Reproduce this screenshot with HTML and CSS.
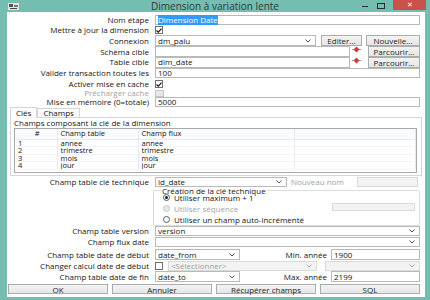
FILE: index.html
```html
<!DOCTYPE html>
<html lang="fr">

<head>
    <meta charset="UTF-8">
    <title>Dimension à variation lente</title>
    <link rel="stylesheet" href="styles.css">
</head>

<body>

    <div class="window">

        <div class="titlebar">
            <div class="app-icon">
                <svg width="11" height="7" viewBox="0 0 11 7">
                    <rect x="0" y="0" width="11" height="7" fill="#e4e4e4" />
                    <rect x="1" y="1" width="4" height="3" fill="#555" />
                    <rect x="6" y="2" width="4" height="2" fill="#7a7a7a" />
                    <rect x="2" y="5" width="7" height="1" fill="#444" />
                </svg>
            </div>
            <div class="title">Dimension à variation lente</div>
            <div class="controls">
                <span class="ctl-min"></span>
                <span class="ctl-max"></span>
                <span class="ctl-close">✕</span>
            </div>
        </div>

        <div class="client">

            <div class="row h10">
                <span class="lbl">Nom étape</span>
                <div class="input grow"><span class="selected">Dimension Date</span></div>
            </div>

            <div class="row h10">
                <span class="lbl">Mettre à jour la dimension</span>
                <span class="check on">
                    <svg width="6" height="5" viewBox="0 0 6 5"><path d="M0.5 2.5 L2.3 4.2 L5.5 0.6" fill="none" stroke="#1a1a1a" stroke-width="1.2" /></svg>
                </span>
            </div>

            <div class="row h11">
                <span class="lbl">Connexion</span>
                <div class="combo w-conn"><span class="val">dm_palu</span><svg class="chev" width="6" height="4" viewBox="0 0 6 4"><path d="M0.5 0.5 L3 3 L5.5 0.5" fill="none" stroke="#555" /></svg></div>
                <button class="btn w-edit">Editer...</button>
                <button class="btn w-new">Nouvelle...</button>
            </div>

            <div class="row h11">
                <span class="lbl">Schéma cible</span>
                <div class="input w-path"></div>
                <span class="var-icon">
                    <svg width="9" height="7" viewBox="0 0 9 7"><path d="M4.5 0.5 L7.5 3.5 L4.5 6.5 L1.5 3.5 Z" fill="#d23b3b" /><path d="M0 3.5 H2 M7 3.5 H9" stroke="#9a9a9a" /></svg>
                </span>
                <button class="btn grow">Parcourir...</button>
            </div>

            <div class="row h10-5">
                <span class="lbl">Table cible</span>
                <div class="input w-path">dim_date</div>
                <span class="var-icon">
                    <svg width="9" height="7" viewBox="0 0 9 7"><path d="M4.5 0.5 L7.5 3.5 L4.5 6.5 L1.5 3.5 Z" fill="#d23b3b" /><path d="M0 3.5 H2 M7 3.5 H9" stroke="#9a9a9a" /></svg>
                </span>
                <button class="btn grow">Parcourir...</button>
            </div>

            <div class="row h10-5">
                <span class="lbl">Valider transaction toutes les</span>
                <div class="input grow">100</div>
            </div>

            <div class="row h10 mt1">
                <span class="lbl">Activer mise en cache</span>
                <span class="check on">
                    <svg width="6" height="5" viewBox="0 0 6 5"><path d="M0.5 2.5 L2.3 4.2 L5.5 0.6" fill="none" stroke="#1a1a1a" stroke-width="1.2" /></svg>
                </span>
            </div>

            <div class="row h8">
                <span class="lbl muted">Précharger cache</span>
                <span class="check off"></span>
            </div>

            <div class="row h10">
                <span class="lbl">Mise en mémoire (0=totale)</span>
                <div class="input grow">5000</div>
            </div>

            <div class="tabs">
                <span class="tab active">Clés</span>
                <span class="tab">Champs</span>
            </div>

            <div class="pane">
                <div class="caption">Champs composant la clé de la dimension</div>
                <div class="grid-wrap">
                    <table class="grid">
                        <colgroup>
                            <col class="c-num">
                            <col class="c-table">
                            <col class="c-flux">
                            <col>
                        </colgroup>
                        <thead>
                            <tr>
                                <th class="num">#</th>
                                <th>Champ table</th>
                                <th>Champ flux</th>
                                <th></th>
                            </tr>
                        </thead>
                        <tbody>
                            <tr><td>1</td><td>annee</td><td>annee</td><td></td></tr>
                            <tr><td>2</td><td>trimestre</td><td>trimestre</td><td></td></tr>
                            <tr><td>3</td><td>mois</td><td>mois</td><td></td></tr>
                            <tr><td>4</td><td>jour</td><td>jour</td><td></td></tr>
                        </tbody>
                    </table>
                </div>
            </div>

            <div class="row h10 mt1">
                <span class="lbl">Champ table clé technique</span>
                <div class="combo w-key"><span class="val">id_date</span><svg class="chev" width="6" height="4" viewBox="0 0 6 4"><path d="M0.5 0.5 L3 3 L5.5 0.5" fill="none" stroke="#555" /></svg></div>
                <span class="side-lbl muted">Nouveau nom</span>
                <div class="input disabled w-newname"></div>
            </div>

            <div class="group">
                <span class="group-title">Création de la clé technique</span>
                <div class="radio-row"><span class="radio on"></span>Utiliser maximum + 1</div>
                <div class="radio-row muted"><span class="radio off"></span>Utiliser séquence<div class="input disabled w-seq"></div></div>
                <div class="radio-row"><span class="radio"></span>Utiliser un champ auto-incrémenté</div>
            </div>

            <div class="row h10">
                <span class="lbl">Champ table version</span>
                <div class="combo grow"><span class="val">version</span><svg class="chev" width="6" height="4" viewBox="0 0 6 4"><path d="M0.5 0.5 L3 3 L5.5 0.5" fill="none" stroke="#555" /></svg></div>
            </div>

            <div class="row h10 mt1">
                <span class="lbl">Champ flux date</span>
                <div class="combo grow"><span class="val"></span><svg class="chev" width="6" height="4" viewBox="0 0 6 4"><path d="M0.5 0.5 L3 3 L5.5 0.5" fill="none" stroke="#555" /></svg></div>
            </div>

            <div class="row h11 mt2">
                <span class="lbl">Champ table date de début</span>
                <div class="combo w-date"><span class="val">date_from</span><svg class="chev" width="6" height="4" viewBox="0 0 6 4"><path d="M0.5 0.5 L3 3 L5.5 0.5" fill="none" stroke="#555" /></svg></div>
                <span class="year-lbl">Min. année</span>
                <div class="input w-year">1900</div>
            </div>

            <div class="row h10 mt1">
                <span class="lbl">Changer calcul date de début</span>
                <span class="check"></span>
                <div class="combo disabled w-calc"><span class="val">&lt;Sélectionner&gt;</span><svg class="chev" width="6" height="4" viewBox="0 0 6 4"><path d="M0.5 0.5 L3 3 L5.5 0.5" fill="none" stroke="#b0b0b0" /></svg></div>
                <div class="combo disabled grow"><span class="val"></span><svg class="chev" width="6" height="4" viewBox="0 0 6 4"><path d="M0.5 0.5 L3 3 L5.5 0.5" fill="none" stroke="#b0b0b0" /></svg></div>
            </div>

            <div class="row h11">
                <span class="lbl">Champ table date de fin</span>
                <div class="combo w-date"><span class="val">date_to</span><svg class="chev" width="6" height="4" viewBox="0 0 6 4"><path d="M0.5 0.5 L3 3 L5.5 0.5" fill="none" stroke="#555" /></svg></div>
                <span class="year-lbl">Max. année</span>
                <div class="input w-year">2199</div>
            </div>

            <div class="actions">
                <button class="btn">OK</button>
                <button class="btn">Annuler</button>
                <button class="btn">Récupérer champs</button>
                <button class="btn">SQL</button>
            </div>

        </div>
    </div>

</body>

</html>
```

FILE: styles.css
```css
body {
    margin: 0;
    background-color: #74bdb1;
    font-family: 'Open Sans', 'Noto Sans', sans-serif;
    font-size: 8px;
    line-height: 1;
    color: #161616;
}

.window {
    width: 430px;
    height: 300px;
    overflow: hidden;
}

/* title bar */

.titlebar {
    height: 12px;
    display: grid;
    grid-template-columns: 1fr auto 1fr;
    align-items: center;
}

.app-icon {
    display: flex;
    padding-left: 8px;
}

.title {
    font-size: 10px;
    color: #2c3a38;
}

.controls {
    display: flex;
    justify-content: flex-end;
    align-items: flex-start;
    height: 12px;
}

.ctl-min {
    width: 6px;
    height: 1px;
    margin-top: 6px;
    background-color: #2b2b2b;
}

.ctl-max {
    width: 6px;
    height: 4px;
    margin: 3px 0 0 9px;
    border: 1px solid #2b2b2b;
}

.ctl-close {
    width: 33px;
    height: 10px;
    margin: 0 4px 0 8px;
    background-color: #c9524b;
    color: #fff;
    font-size: 7px;
    line-height: 10px;
    text-align: center;
}

/* client area */

.client {
    width: 418px;
    height: 285px;
    margin-left: 7px;
    padding-top: 3px;
    box-sizing: border-box;
    background-color: #fff;
}

.row {
    display: flex;
    align-items: center;
    padding-right: 5px;
}

.h8 { height: 8px; }
.h10 { height: 10px; }
.h10-5 { height: 10.5px; }
.h11 { height: 11px; }
.mt1 { margin-top: 1px; }
.mt2 { margin-top: 2px; }

.lbl {
    flex: none;
    width: 148px;
    padding-right: 6px;
    box-sizing: border-box;
    text-align: right;
    white-space: nowrap;
}

.muted {
    color: #a3a3a3;
}

.grow {
    flex: 1;
}

.input,
.combo {
    display: flex;
    align-items: center;
    align-self: stretch;
    padding: 0 2px;
    border: 1px solid #b9b9b9;
    box-sizing: border-box;
    background-color: #fff;
    white-space: nowrap;
}

.combo {
    padding-right: 4px;
}

.combo .val {
    flex: 1;
}

.combo.disabled,
.input.disabled {
    background-color: #f3f3f3;
    border-color: #dadada;
    color: #9a9a9a;
}

.selected {
    background-color: #3399ff;
    color: #fff;
    padding: 1px 0;
}

.btn {
    display: flex;
    align-items: center;
    justify-content: center;
    align-self: stretch;
    padding: 0;
    border: 1px solid #adadad;
    background: linear-gradient(#f3f3f3, #e6e6e6);
    font-family: inherit;
    font-size: 8px;
    color: #1e1e1e;
    white-space: nowrap;
}

.w-conn { width: 161px; }
.w-edit { width: 41px; margin-left: 5px; }
.w-new { width: 54px; margin-left: 4px; }
.w-path { width: 195px; }
.w-key { width: 132px; }
.w-newname { width: 61px; margin-left: auto; margin-right: 2px; }
.w-date { width: 85px; }
.w-year { width: 89px; }
.w-calc { width: 149px; margin: 0 8px 0 5px; }

.var-icon {
    display: flex;
    align-self: flex-start;
    margin: 0 7px 0 2px;
}

.check {
    width: 8px;
    height: 8px;
    border: 1px solid #6f6f6f;
    box-sizing: border-box;
    display: flex;
    align-items: center;
    justify-content: center;
    background-color: #fff;
}

.check.off {
    width: 9px;
    height: 7px;
    border-color: #c4c4c4;
    background-color: #e8e8e8;
}

.side-lbl {
    margin-left: 4px;
}

.year-lbl {
    flex: 1;
    text-align: right;
    padding-right: 4px;
}

/* tabs */

.tabs {
    display: flex;
    align-items: flex-end;
    height: 10px;
    margin-left: 3px;
}

.tab {
    height: 9px;
    padding: 0 5px;
    border: 1px solid #d6d6d6;
    border-bottom: none;
    box-sizing: border-box;
    display: flex;
    align-items: center;
    background-color: #fbfbfb;
}

.tab.active {
    height: 11px;
    margin-bottom: -1px;
    background-color: #fff;
    position: relative;
}

.pane {
    width: 412px;
    height: 59px;
    margin-left: 3px;
    padding: 0 4px 0 3px;
    border: 1px solid #d6d6d6;
    box-sizing: border-box;
}

.caption {
    height: 9.5px;
    display: flex;
    align-items: center;
}

.grid-wrap {
    height: 45px;
    border: 1px solid #a9a9a9;
    box-sizing: border-box;
    overflow: hidden;
}

.grid {
    width: 100%;
    table-layout: fixed;
    border-collapse: collapse;
    font-size: 7.5px;
}

.c-num { width: 42px; }
.c-table { width: 81px; }
.c-flux { width: 156px; }

.grid th,
.grid td {
    padding: 0 0 0 3px;
    text-align: left;
    font-weight: normal;
    border-right: 1px solid #e4eaf1;
    white-space: nowrap;
    overflow: hidden;
}

.grid th {
    height: 10px;
    line-height: 9px;
    background-color: #fafbfc;
    border-bottom: 1px solid #e4eaf1;
}

.grid th.num {
    text-align: center;
}

.grid td {
    height: 6.5px;
    line-height: 6.5px;
    border-bottom: 1px solid #f0f3f7;
}

/* technical key group */

.group {
    width: 267px;
    height: 36px;
    margin: 3px 0 0 146px;
    padding-top: 2px;
    border: 1px solid #dcdcdc;
    border-radius: 2px;
    box-sizing: border-box;
}

.group-title {
    display: block;
    width: fit-content;
    height: 7px;
    line-height: 7px;
    margin: -6px 0 -2px 7px;
    padding: 0 1px;
    background-color: #fff;
}

.radio-row {
    display: flex;
    align-items: center;
    height: 11px;
    padding: 0 4px 0 9px;
}

.radio {
    width: 7px;
    height: 7px;
    margin-right: 4px;
    border: 1px solid #5c5c5c;
    border-radius: 50%;
    box-sizing: border-box;
    display: flex;
    align-items: center;
    justify-content: center;
}

.radio.on::after {
    content: "";
    width: 3px;
    height: 3px;
    border-radius: 50%;
    background-color: #1a1a1a;
}

.radio.off {
    border-color: #c8c8c8;
    background-color: #e8e8e8;
}

.w-seq {
    width: 83px;
    height: 8px;
    margin-left: auto;
}

/* bottom buttons */

.actions {
    display: flex;
    gap: 4px;
    height: 10px;
    margin: 2px 5px 0 1px;
}

.actions .btn {
    flex: 1;
}
```
